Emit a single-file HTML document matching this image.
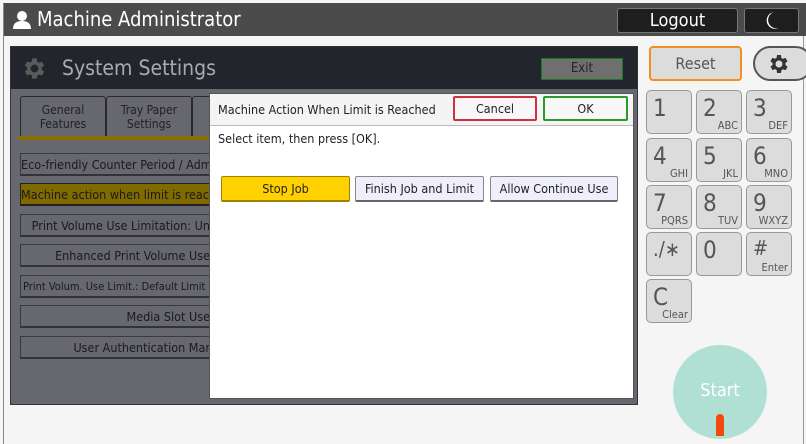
<!DOCTYPE html>
<html><head><style>
*{margin:0;padding:0;box-sizing:border-box}
body{width:806px;height:444px;overflow:hidden;background:#f5f5f5;font-family:"DejaVu Sans Condensed","Liberation Sans",sans-serif;position:relative}
.a{position:absolute}
.top{left:3px;top:3px;width:803px;height:33px;background:#4b4b4b}
.lb{left:3px;top:3px;width:1px;height:441px;background:#888}
.rb{left:803px;top:36px;width:1px;height:408px;background:#999}
.tt{left:37px;top:7px;color:#fff;font-size:20px}
.dkb{background:#1e1e1e;border:1px solid #777;border-radius:3px;color:#fff;text-align:center}
.panel{left:10px;top:46px;width:628px;height:359px;background:#66676f;border:1px solid #333}
.ph{left:0;top:0;width:626px;height:42px;background:#23252d}
.tab{background:#66676f;border:1px solid #2a2a2a;border-bottom:none;color:#222;font-size:12px;text-align:center;line-height:14px;padding-top:6px;border-radius:3px 3px 0 0}
.li{left:9px;height:23px;background:#66676f;border:1px solid #3a3a3a;border-bottom:2px solid #333;border-right:none;font-size:12.5px;color:#1a1a1a;line-height:21px;white-space:nowrap;overflow:hidden;text-align:right;padding-right:0}
.dlg{left:209px;top:93px;width:425px;height:306px;background:#fff;border:1px solid #555}
.btn{border:1px solid #888;border-bottom:2px solid #666;border-radius:2px;font-size:12.5px;text-align:center;color:#222}
.k{width:46px;height:44px;background:#dcdcdc;border:1px solid #999;border-radius:5px;color:#555}
.k b{position:absolute;left:6px;top:3px;font-weight:normal;font-size:24px}
.k i{position:absolute;right:3px;bottom:1px;font-style:normal;font-size:11px}
</style></head><body>
<div class="a top"></div>
<div class="a lb"></div><div class="a rb"></div>
<svg class="a" style="left:12px;top:10px" width="20" height="20" viewBox="0 0 20 20"><circle cx="10" cy="6" r="5" fill="#fff"/><path d="M1 19 Q1 11 10 11 Q19 11 19 19Z" fill="#fff"/></svg>
<div class="a tt">Machine Administrator</div>
<div class="a dkb" style="left:617px;top:8px;width:121px;height:25px;font-size:18px;line-height:23px">Logout</div>
<div class="a dkb" style="left:744px;top:8px;width:55px;height:25px"></div>
<svg class="a" style="left:764px;top:11px" width="16" height="19" viewBox="0 0 16 19"><path d="M10 1 A8.5 8.5 0 1 0 15 17 A7 7 0 0 1 10 1Z" fill="#fff"/></svg>

<div class="a panel">
 <div class="a ph"></div>
 <svg class="a" style="left:10px;top:8px" width="27" height="27" viewBox="0 0 24 24"><path fill="#5a5a5a" d="M19.4 13a7.5 7.5 0 000-2l2.1-1.6-2-3.5-2.5 1a7 7 0 00-1.7-1L15 3h-4l-.4 2.7a7 7 0 00-1.7 1l-2.5-1-2 3.5L6.6 11a7.5 7.5 0 000 2l-2.1 1.6 2 3.5 2.5-1a7 7 0 001.7 1L11 21h4l.4-2.7a7 7 0 001.7-1l2.5 1 2-3.5zM13 15.5a3.5 3.5 0 110-7 3.5 3.5 0 010 7z" transform="translate(-1 0)"/></svg>
 <div class="a" style="left:51px;top:9px;font-size:21px;color:#aaa">System Settings</div>
 <div class="a" style="left:530px;top:11px;width:82px;height:22px;background:#6f6f6f;border:1px solid #1a7a1a;font-size:13px;text-align:center;line-height:20px;color:#222">Exit</div>
 <div class="a tab" style="left:9px;top:49px;width:86px;height:40px">General<br>Features</div>
 <div class="a tab" style="left:95px;top:49px;width:86px;height:40px">Tray Paper<br>Settings</div>
 <div class="a tab" style="left:181px;top:49px;width:30px;height:40px"></div>
 <div class="a" style="left:7px;top:89px;width:200px;height:4px;background:#8a7000"></div>
 <div class="a li" style="top:106px;width:190px">Eco-friendly Counter Period / Adm</div>
 <div class="a li" style="top:136px;width:190px;background:#806a00;border-color:#222;text-align:left">Machine action when limit is reached</div>
 <div class="a li" style="top:167px;width:190px">Print Volume Use Limitation: Un</div>
 <div class="a li" style="top:197px;width:190px">Enhanced Print Volume Use</div>
 <div class="a li" style="top:228px;width:190px;font-size:11px;text-align:left;padding-left:2px">Print Volum. Use Limit.: Default Limit Value</div>
 <div class="a li" style="top:258px;width:190px">Media Slot Use</div>
 <div class="a li" style="top:289px;width:190px">User Authentication Mar</div>
</div>

<div class="a dlg">
 <div class="a" style="left:0;top:0;width:423px;height:32px;background:#f4f4f4;border-bottom:1px solid #bbb"></div>
 <div class="a" style="left:8px;top:8px;font-size:12.5px;color:#222">Machine Action When Limit is Reached</div>
 <div class="a btn" style="left:243px;top:2px;width:84px;height:25px;border:2px solid #d03040;background:#f7f7f7;line-height:21px">Cancel</div>
 <div class="a btn" style="left:333px;top:2px;width:85px;height:25px;border:2px solid #2a9a2a;background:#f7f7f7;line-height:21px">OK</div>
 <div class="a" style="left:8px;top:37px;font-size:12.5px;color:#222">Select item, then press [OK].</div>
 <div class="a btn" style="left:11px;top:82px;width:129px;height:26px;background:#ffd100;border-color:#a08000;line-height:23px">Stop Job</div>
 <div class="a btn" style="left:145px;top:82px;width:129px;height:26px;background:#efeffb;line-height:23px">Finish Job and Limit</div>
 <div class="a btn" style="left:280px;top:82px;width:128px;height:26px;background:#efeffb;line-height:23px">Allow Continue Use</div>
</div>

<div class="a" style="left:649px;top:46px;width:93px;height:35px;background:#dcdcdc;border:2px solid #f09020;border-radius:4px;font-size:16px;color:#555;text-align:center;line-height:31px">Reset</div>
<div class="a" style="left:753px;top:46px;width:60px;height:35px;background:#dcdcdc;border:2px solid #555;border-radius:18px"></div>
<svg class="a" style="left:767px;top:52px" width="24" height="24" viewBox="0 0 24 24"><path fill="#333" d="M19.4 13a7.5 7.5 0 000-2l2.1-1.6-2-3.5-2.5 1a7 7 0 00-1.7-1L15 3h-4l-.4 2.7a7 7 0 00-1.7 1l-2.5-1-2 3.5L6.6 11a7.5 7.5 0 000 2l-2.1 1.6 2 3.5 2.5-1a7 7 0 001.7 1L11 21h4l.4-2.7a7 7 0 001.7-1l2.5 1 2-3.5zM13 15.5a3.5 3.5 0 110-7 3.5 3.5 0 010 7z" transform="translate(-1 0)"/></svg>

<div class="a k" style="left:646px;top:90px"><b>1</b></div>
<div class="a k" style="left:696px;top:90px"><b>2</b><i>ABC</i></div>
<div class="a k" style="left:746px;top:90px"><b>3</b><i>DEF</i></div>
<div class="a k" style="left:646px;top:138px"><b>4</b><i>GHI</i></div>
<div class="a k" style="left:696px;top:138px"><b>5</b><i>JKL</i></div>
<div class="a k" style="left:746px;top:138px"><b>6</b><i>MNO</i></div>
<div class="a k" style="left:646px;top:185px"><b>7</b><i>PQRS</i></div>
<div class="a k" style="left:696px;top:185px"><b>8</b><i>TUV</i></div>
<div class="a k" style="left:746px;top:185px"><b>9</b><i>WXYZ</i></div>
<div class="a k" style="left:646px;top:232px"><b style="font-size:20px;top:4px">./∗</b></div>
<div class="a k" style="left:696px;top:232px"><b>0</b></div>
<div class="a k" style="left:746px;top:232px"><b style="font-size:20px">#</b><i>Enter</i></div>
<div class="a k" style="left:646px;top:279px"><b>C</b><i>Clear</i></div>

<div class="a" style="left:673px;top:345px;width:94px;height:94px;border-radius:50%;background:#b0e0d3;color:#fff;font-size:18px;text-align:center;line-height:92px">Start</div>
<div class="a" style="left:716px;top:414px;width:8px;height:22px;border-radius:4px 4px 0 0;background:#f04a10"></div>
</body></html>
